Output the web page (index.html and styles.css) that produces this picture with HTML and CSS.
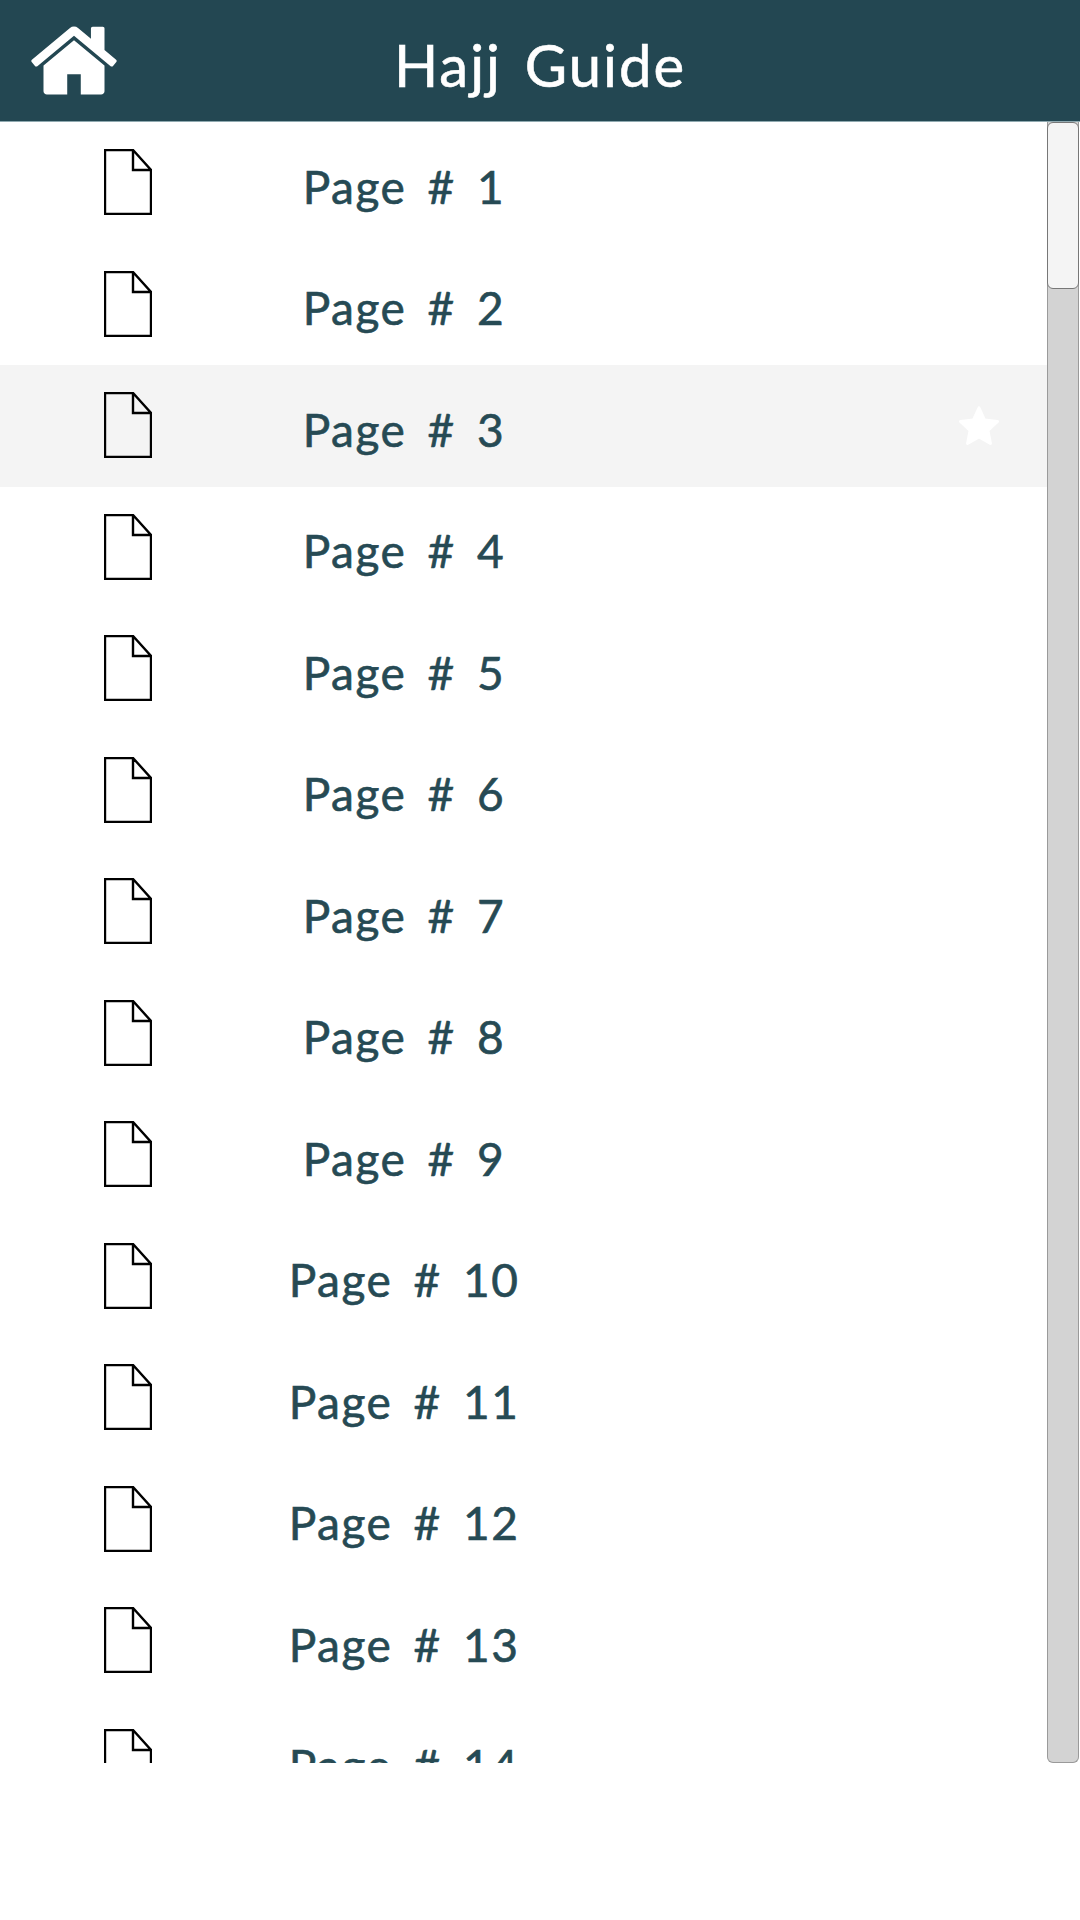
FILE: index.html
```html
<!DOCTYPE html>
<html lang="en">
<head>
  <meta charset="UTF-8" />
  <meta name="viewport" content="width=device-width, initial-scale=1.0"/>
  <title>Hajj Guide</title>
  <link rel="stylesheet" href="styles.css">
</head>
<body>

  <!-- Shared page icon -->
  <svg class="defs" width="0" height="0">
    <symbol id="page-icon" viewBox="0 0 48 66">
      <path d="M1 1H29L47 21V65H1Z M29 1V21H47" fill="none" stroke="#000" stroke-width="2.4"/>
    </symbol>
  </svg>

  <!-- Top bar -->
  <header class="top-bar">
    <svg class="home-icon" viewBox="20 150 1624 1392">
      <path fill="#fff" d="M1408 992v480q0 26-19 45t-45 19h-384v-384h-256v384h-384q-26 0-45-19t-19-45v-480q0-1 .5-3t.5-3l575-474 575 474q1 2 1 6zm223-69l-62 74q-8 9-21 11h-3q-13 0-21-7l-692-577-692 577q-12 8-24 7-13-2-21-11l-62-74q-8-10-7-23.500t11-21l719-599q32-26 76-26t76 26l244 204v-195q0-14 9-23t23-9h192q14 0 23 9t9 23v408l219 182q10 8 11 21.500t-7 23.500z"/>
    </svg>
    <h1 class="title">Hajj Guide</h1>
  </header>

  <!-- Page list with its scrollbar -->
  <main class="content">
    <ul class="page-list">
      <li class="page-row"><svg class="page-icon"><use href="#page-icon"/></svg><span class="page-name">Page # 1</span></li>
      <li class="page-row"><svg class="page-icon"><use href="#page-icon"/></svg><span class="page-name">Page # 2</span></li>
      <li class="page-row active"><svg class="page-icon"><use href="#page-icon"/></svg><span class="page-name">Page # 3</span>
        <svg class="star-icon" viewBox="0 0 24 24"><path fill="#fff" stroke="#fff" stroke-width="1.5" stroke-linejoin="round" d="M12 2.500l2.900 6.300 6.800.8-5 4.700 1.300 6.800-6-3.400-6 3.400 1.300-6.800-5-4.700 6.800-.8z"/></svg>
      </li>
      <li class="page-row"><svg class="page-icon"><use href="#page-icon"/></svg><span class="page-name">Page # 4</span></li>
      <li class="page-row"><svg class="page-icon"><use href="#page-icon"/></svg><span class="page-name">Page # 5</span></li>
      <li class="page-row"><svg class="page-icon"><use href="#page-icon"/></svg><span class="page-name">Page # 6</span></li>
      <li class="page-row"><svg class="page-icon"><use href="#page-icon"/></svg><span class="page-name">Page # 7</span></li>
      <li class="page-row"><svg class="page-icon"><use href="#page-icon"/></svg><span class="page-name">Page # 8</span></li>
      <li class="page-row"><svg class="page-icon"><use href="#page-icon"/></svg><span class="page-name">Page # 9</span></li>
      <li class="page-row"><svg class="page-icon"><use href="#page-icon"/></svg><span class="page-name">Page # 10</span></li>
      <li class="page-row"><svg class="page-icon"><use href="#page-icon"/></svg><span class="page-name">Page # 11</span></li>
      <li class="page-row"><svg class="page-icon"><use href="#page-icon"/></svg><span class="page-name">Page # 12</span></li>
      <li class="page-row"><svg class="page-icon"><use href="#page-icon"/></svg><span class="page-name">Page # 13</span></li>
      <li class="page-row"><svg class="page-icon"><use href="#page-icon"/></svg><span class="page-name">Page # 14</span></li>
    </ul>
    <div class="scroll-track">
      <div class="scroll-thumb"></div>
    </div>
  </main>

</body>
</html>
```

FILE: styles.css
```css
/* Page base styles */
body {
  margin: 0;
  height: 1920px;
  background: #fff;
  font-family: "Lato", "Noto Sans", sans-serif;
  overflow: hidden;
}

.defs {
  display: block;
  height: 0;
}

/* Top bar */
.top-bar {
  display: grid;
  grid-template-columns: 1fr auto 1fr;
  align-items: center;
  height: 121px;
  padding-left: 31px;
  padding-right: 31px;
  background: #234752;
  border-bottom: 1px solid #8fa9b0;
}

.home-icon {
  width: 86px;
  height: 74px;
  margin-bottom: 5px;
}

.title {
  margin: 8px 0 0;
  color: #fff;
  font-size: 58px;
  font-weight: 400;
  letter-spacing: 2px;
  word-spacing: 6px;
  -webkit-text-stroke: 0.6px #fff;
}

/* List and scrollbar */
.content {
  display: flex;
  height: 1641px;
}

.page-list {
  flex: 1;
  margin: 0;
  padding: 0;
  list-style: none;
  overflow: hidden;
}

.page-row {
  display: grid;
  grid-template-columns: 256px 296px 1fr 89px;
  align-items: center;
  height: 121.5px;
}

.page-row.active {
  background: #f4f4f4;
}

.page-icon {
  justify-self: center;
  width: 48px;
  height: 66px;
  margin-bottom: 1px;
}

.page-name {
  padding-top: 7px;
  color: #264a54;
  font-size: 46px;
  text-align: center;
  letter-spacing: 1.5px;
  word-spacing: 8px;
  white-space: nowrap;
  -webkit-text-stroke: 0.6px #264a54;
}

.star-icon {
  grid-column: 4;
  justify-self: start;
  width: 46px;
  height: 46px;
  margin-left: -2px;
}

.scroll-track {
  width: 30px;
  margin-right: 1px;
  background: #d3d3d3;
  border: 1px solid #9a9a9a;
  border-top: none;
  border-radius: 0 0 6px 6px;
}

.scroll-thumb {
  height: 165px;
  margin: 0 -1px;
  background: #f4f4f4;
  border: 1px solid #777;
  border-radius: 6px;
}
```
